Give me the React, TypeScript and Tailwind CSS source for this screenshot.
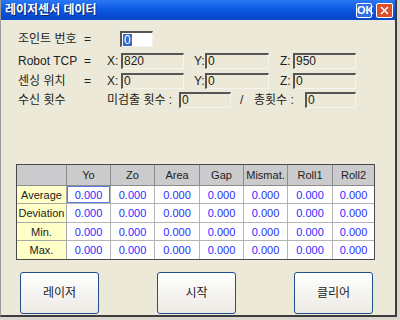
import type { FC, ReactNode } from 'react'

const font = { fontFamily: '"Liberation Sans", "Noto Sans CJK KR", sans-serif' }

const cols = ['Yo', 'Zo', 'Area', 'Gap', 'Mismat.', 'Roll1', 'Roll2']
const rows = ['Average', 'Deviation', 'Min.', 'Max.']

// 윈도우 스타일 오목한 입력 상자
const Box: FC<{ w: string; value: string }> = ({ w, value }) => (
  <div
    className={`${w} h-[16px] shrink-0 border-t-2 border-l-2 border-t-[#555] border-l-[#555] border-b border-r border-b-[#f4f3ee] border-r-[#f4f3ee] bg-[#ECE9D8] text-[12px] leading-[13px] pl-[1px] text-[#222] overflow-hidden`}
  >
    {value}
  </div>
)

const Label: FC<{ w: string; children: ReactNode }> = ({ w, children }) => (
  <div className={`${w} shrink-0 text-[12px] leading-[16px] text-[#222] whitespace-nowrap`}>{children}</div>
)

const XpButton: FC<{ label: string }> = ({ label }) => (
  <button className="w-[79px] h-[42px] rounded-[3px] border border-[#1f4f8f] bg-gradient-to-b from-white to-[#eceae4] text-[12px] text-[#222]">
    {label}
  </button>
)

export default function App() {
  return (
    <div className="w-[400px] h-[320px] bg-[#d9d6cd] overflow-hidden" style={font}>
      <div className="w-[397px] h-[317px] bg-[#ECE9D8] border-l border-l-[#9a9a9a] border-r-2 border-r-[#3c3c3c] border-b-2 border-b-[#3c3c3c] flex flex-col">
        {/* 타이틀 바 */}
        <div className="h-[20px] shrink-0 flex items-center bg-gradient-to-b from-[#2a78f5] via-[#0a56e2] to-[#0846c8] pl-[4px] pr-[2px]">
          <span className="flex-1 text-white font-bold text-[12px] leading-[16px] [text-shadow:1px_1px_0_#0a1f6a]">레이저센서 데이터</span>
          <div className="w-[16px] h-[15px] rounded-[2px] border border-white bg-[#2f6ee8] text-white font-bold text-[11px] leading-[13px] text-center mr-[4px]">OK</div>
          <div className="w-[17px] h-[15px] rounded-[2px] border border-white bg-[#dd4f2c] flex items-center justify-center">
            <svg width="9" height="9" viewBox="0 0 9 9">
              <path d="M1 1L8 8M8 1L1 8" stroke="white" strokeWidth="1.6" />
            </svg>
          </div>
        </div>

        <div className="flex flex-col pl-[17px]">
          <div className="flex items-center h-[16px] mt-[11px]">
            <Label w="w-[66px]">조인트 번호</Label>
            <Label w="w-[36px]">=</Label>
            <div className="w-[33px] h-[16px] border-t-2 border-l-2 border-t-[#555] border-l-[#555] border-b border-r border-b-[#f4f3ee] border-r-[#f4f3ee] bg-white pl-[1px] flex items-center">
              <span className="bg-[#316AC5] text-white text-[12px] leading-[12px] px-[1px]">0</span>
            </div>
          </div>

          <div className="flex items-center h-[16px] mt-[6px]">
            <Label w="w-[66px]">Robot TCP</Label>
            <Label w="w-[23px]">=</Label>
            <Label w="w-[14px]">X:</Label>
            <Box w="w-[63px]" value="820" />
            <Label w="w-[10px]"> </Label>
            <Label w="w-[11px]">Y:</Label>
            <Box w="w-[64px]" value="0" />
            <Label w="w-[11px]"> </Label>
            <Label w="w-[13px]">Z:</Label>
            <Box w="w-[63px]" value="950" />
          </div>

          <div className="flex items-center h-[16px] mt-[4px]">
            <Label w="w-[66px]">센싱 위치</Label>
            <Label w="w-[23px]">=</Label>
            <Label w="w-[14px]">X:</Label>
            <Box w="w-[63px]" value="0" />
            <Label w="w-[10px]"> </Label>
            <Label w="w-[11px]">Y:</Label>
            <Box w="w-[64px]" value="0" />
            <Label w="w-[11px]"> </Label>
            <Label w="w-[13px]">Z:</Label>
            <Box w="w-[63px]" value="0" />
          </div>

          <div className="flex items-center h-[16px] mt-[3px]">
            <Label w="w-[89px]">수신 횟수</Label>
            <Label w="w-[72px]">미검출 횟수 :</Label>
            <Box w="w-[52px]" value="0" />
            <Label w="w-[23px]">
              <span className="pl-[9px]">/</span>
            </Label>
            <Label w="w-[51px]">총횟수 :</Label>
            <Box w="w-[51px]" value="0" />
          </div>
        </div>

        {/* 결과 표 */}
        <div className="ml-[15px] mt-[56px] w-[359px] border border-[#4a4a4a] grid grid-cols-[50px_44px_44px_45px_44px_44px_45px_41px] grid-rows-[21px_18px_19px_18px_18px] text-[11px] leading-[14px]">
          <div className="bg-[#cbcbcd] border-r border-b border-[#8c8c8c]" />
          {cols.map((c, i) => (
            <div
              key={c}
              className={`bg-[#cbcbcd] border-b border-[#8c8c8c] flex items-center justify-center text-[#222] ${i < cols.length - 1 ? 'border-r' : ''}`}
            >
              {c}
            </div>
          ))}
          {rows.map((r, ri) =>
            [
              <div key={r} className={`bg-[#ffffc8] border-r border-[#a8a8a8] flex items-center justify-center text-[#222] ${ri < rows.length - 1 ? 'border-b' : ''}`}>
                {r}
              </div>,
              ...cols.map((c, ci) => (
                <div
                  key={r + c}
                  className={`bg-white border-[#b4b4b4] flex items-center justify-center text-[#2b2bff] ${ci < cols.length - 1 ? 'border-r' : ''} ${ri < rows.length - 1 ? 'border-b' : ''}`}
                >
                  {ri === 0 && ci === 0 ? (
                    <div className="w-full h-full border border-[#5b7be0] flex items-center justify-center">0.000</div>
                  ) : (
                    '0.000'
                  )}
                </div>
              )),
            ]
          )}
        </div>

        <div className="flex justify-between pl-[19px] pr-[22px] mt-[12px]">
          <XpButton label="레이저" />
          <XpButton label="시작" />
          <XpButton label="클리어" />
        </div>
      </div>
    </div>
  )
}
